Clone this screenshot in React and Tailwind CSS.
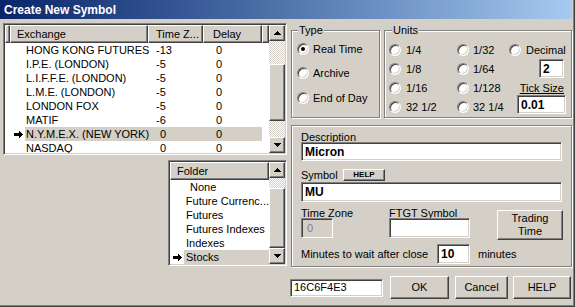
import React from "react";

const sunken =
  "border border-[#808080] border-r-white border-b-white shadow-[inset_1px_1px_0_#404040,inset_-1px_-1px_0_#d4d0c8]";
const raised =
  "border border-white border-r-[#404040] border-b-[#404040] shadow-[inset_-1px_-1px_0_#808080]";
const etched = "border border-[#808080] shadow-[1px_1px_0_#fff,inset_1px_1px_0_#fff]";
const checker =
  "bg-[image:repeating-conic-gradient(#fff_0_25%,#d4d0c8_0_50%)] bg-[length:2px_2px]";

const exchanges = [
  ["HONG KONG FUTURES", "-13", "0"],
  ["I.P.E. (LONDON)", "-5", "0"],
  ["L.I.F.F.E. (LONDON)", "-5", "0"],
  ["L.M.E. (LONDON)", "-5", "0"],
  ["LONDON FOX", "-5", "0"],
  ["MATIF", "-6", "0"],
  ["N.Y.M.E.X. (NEW YORK)", "0", "0"],
  ["NASDAQ", "0", "0"],
];

const folders = ["None", "Future Currenc...", "Futures", "Futures Indexes", "Indexes", "Stocks"];

function Arrow() {
  return (
    <svg width="9" height="7" viewBox="0 0 9 7" shapeRendering="crispEdges">
      <path d="M0 2h5V0h1v1h1v1h1v1h1v1H8v1H7v1H6v1H5V5H0z" fill="#000" />
    </svg>
  );
}

function ScrollBtn({ down }) {
  return (
    <div className={`w-[16px] h-[16px] shrink-0 bg-[#d4d0c8] ${raised} flex items-center justify-center`}>
      <svg width="7" height="4" viewBox="0 0 7 4" shapeRendering="crispEdges">
        <path d={down ? "M0 0h7v1H6v1H5v1H4v1H3V3H2V2H1V1H0z" : "M3 0h1v1h1v1h1v1h1v1H0V3h1V2h1V1h1z"} fill="#000" />
      </svg>
    </div>
  );
}

function ScrollBar({ above, thumb }) {
  return (
    <div className="w-[16px] h-full flex flex-col shrink-0">
      <ScrollBtn />
      <div className={`shrink-0 ${checker}`} style={{ height: above }} />
      <div className={`shrink-0 bg-[#d4d0c8] ${raised}`} style={{ height: thumb }} />
      <div className={`flex-1 ${checker}`} />
      <ScrollBtn down />
    </div>
  );
}

function Radio({ checked }) {
  return (
    <span className="w-[12px] h-[12px] shrink-0 rounded-full bg-white border border-[#808080] border-r-white border-b-white shadow-[inset_1px_1px_0_#404040,inset_-1px_-1px_0_#d4d0c8] flex items-center justify-center">
      {checked && <span className="w-[4px] h-[4px] rounded-full bg-black" />}
    </span>
  );
}

function RadioItem({ label, checked, gap = "ml-[4px]" }) {
  return (
    <div className="flex items-center h-[14px]">
      <Radio checked={checked} />
      <span className={`${gap} whitespace-nowrap`}>{label}</span>
    </div>
  );
}

function ExchangeList() {
  return (
    <div className={`w-[284px] h-[132px] bg-white ${sunken} p-[1px] flex`}>
      <div className="flex-1 flex flex-col overflow-hidden">
        <div className="h-[18px] flex shrink-0">
          <div className={`w-[5px] bg-[#d4d0c8] ${raised}`} />
          <div className={`w-[138px] bg-[#d4d0c8] ${raised} pl-[6px] leading-[16px]`}>Exchange</div>
          <div className={`w-[55px] bg-[#d4d0c8] ${raised} pl-[7px] leading-[16px]`}>Time Z...</div>
          <div className={`w-[59px] bg-[#d4d0c8] ${raised} pl-[9px] leading-[16px]`}>Delay</div>
          <div className={`flex-1 bg-[#d4d0c8] ${raised}`} />
        </div>
        <div className="flex-1 overflow-hidden">
          {exchanges.map(([name, tz, delay], i) => (
            <div key={i} className="h-[14px] flex leading-[14px] whitespace-nowrap">
              <div className="w-[20px] flex items-center justify-end pr-[2px]">{i === 6 && <Arrow />}</div>
              <div className={`flex w-[237px] ${i === 6 ? "bg-[#d4d0c8]" : ""}`}>
                <div className="w-[123px] pl-[1px]">{name}</div>
                <div className={`w-[55px] ${tz.startsWith("-") ? "pl-[8px]" : "pl-[12px]"}`}>{tz}</div>
                <div className="w-[59px] pl-[13px]">{delay}</div>
              </div>
            </div>
          ))}
        </div>
      </div>
      <ScrollBar above={23} thumb={57} />
    </div>
  );
}

function FolderList() {
  return (
    <div className={`mt-[5px] self-end w-[119px] h-[106px] bg-white ${sunken} p-[1px] flex`}>
      <div className="flex-1 flex flex-col overflow-hidden">
        <div className={`h-[18px] shrink-0 bg-[#d4d0c8] ${raised} pl-[6px] leading-[16px]`}>Folder</div>
        {folders.map((f, i) => (
          <div key={f} className="h-[14px] flex leading-[14px] whitespace-nowrap">
            <div className="w-[14px] flex items-center justify-end pr-[2px]">{i === 5 && <Arrow />}</div>
            <div className={`flex-1 ${i === 0 ? "pl-[6px]" : "pl-[2px]"} ${i === 5 ? "bg-[#d4d0c8]" : ""}`}>{f}</div>
          </div>
        ))}
      </div>
      <ScrollBar above={10} thumb={60} />
    </div>
  );
}

function Group({ label, labelLeft, className, children }) {
  return (
    <div className={`relative ${etched} ${className}`}>
      <span className={`absolute -top-[8px] ${labelLeft} px-[1px] bg-[#d4d0c8] leading-[14px]`}>{label}</span>
      {children}
    </div>
  );
}

function Field({ className, children }) {
  return (
    <div className={`relative bg-white ${sunken} pl-[3px] flex items-center whitespace-nowrap ${className}`}>
      {children}
    </div>
  );
}

function Button({ className, children }) {
  return (
    <div className={`bg-[#d4d0c8] ${raised} flex items-center justify-center text-center ${className}`}>
      {children}
    </div>
  );
}

export default function App() {
  return (
    <div className="w-[575px] h-[307px] bg-[#d4d0c8] text-black text-[11px] font-['Liberation_Sans',Arial,sans-serif] border-r border-b border-[#404040] overflow-hidden">
      <div className="h-full border-r border-b border-[#808080] pr-[1px] pb-[1px] flex flex-col">
        <div className="h-[19px] shrink-0 bg-linear-to-r from-[#0a246a] to-[#a6caf0] text-white font-bold text-[12px] pl-[4px] flex items-center">
          Create New Symbol
        </div>

        <div className="flex">
          <div className="ml-[3px] pt-[4px] w-[284px] flex flex-col">
            <ExchangeList />
            <FolderList />
          </div>

          <div className="ml-[4px] pt-[11px] w-[281px] flex flex-col">
            <div className="flex">
              <Group label="Type" labelLeft="left-[6px]" className="w-[89px] h-[88px] pl-[5px]">
                <div className="mt-[11px]"><RadioItem label="Real Time" checked /></div>
                <div className="mt-[10px]"><RadioItem label="Archive" /></div>
                <div className="mt-[11px]"><RadioItem label="End of Day" /></div>
              </Group>
              <Group label="Units" labelLeft="left-[7px]" className="ml-[4px] w-[188px] h-[88px] pl-[4px] flex">
                <div className="w-[68px] pt-[12px] flex flex-col gap-[5px]">
                  <RadioItem label="1/4" gap="ml-[5px]" />
                  <RadioItem label="1/8" gap="ml-[5px]" />
                  <RadioItem label="1/16" gap="ml-[5px]" />
                  <RadioItem label="32 1/2" gap="ml-[5px]" />
                </div>
                <div className="w-[52px] pt-[12px] flex flex-col gap-[5px]">
                  <RadioItem label="1/32" gap="ml-[4px]" />
                  <RadioItem label="1/64" gap="ml-[4px]" />
                  <RadioItem label="1/128" gap="ml-[4px]" />
                  <RadioItem label="32 1/4" gap="ml-[4px]" />
                </div>
                <div className="flex-1 pt-[12px] pr-[5px] flex flex-col items-end">
                  <div className="self-start">
                    <RadioItem label="Decimal" gap="ml-[5px]" />
                  </div>
                  <Field className="mt-[2px] mr-[2px] w-[25px] h-[19px] font-bold text-[12px]">2</Field>
                  <div className="mt-[4px] mr-[2px] h-[13px] leading-[13px] underline">Tick Size</div>
                  <Field className="w-[49px] h-[19px] font-bold text-[12px]">0.01</Field>
                </div>
              </Group>
            </div>

            <div className={`mt-[7px] h-[142px] ${etched} pl-[9px] flex flex-col`}>
              <div className="mt-[5px] h-[11px] leading-[13px]">Description</div>
              <Field className="w-[261px] h-[19px] font-bold text-[12px]">Micron</Field>
              <div className="mt-[8px] h-[12px] flex items-center">
                <span className="w-[42px]">Symbol</span>
                <Button className="w-[42px] h-[12px] text-[8px] font-bold leading-none">HELP</Button>
              </div>
              <Field className="mt-[1px] w-[261px] h-[20px] font-bold text-[12px]">MU</Field>
              <div className="flex">
                <div className="w-[88px] mt-[5px]">
                  <div className="h-[11px] leading-[13px] whitespace-nowrap">Time Zone</div>
                  <div className={`relative w-[32px] h-[20px] bg-[#d4d0c8] ${sunken} pl-[5px] flex items-center text-[#808080]`}>0</div>
                </div>
                <div className="w-[108px] mt-[5px]">
                  <div className="h-[11px] leading-[13px] whitespace-nowrap">FTGT Symbol</div>
                  <Field className="w-[81px] h-[20px]" />
                </div>
                <Button className="mt-[8px] w-[66px] h-[30px] leading-[13px]">
                  Trading
                  <br />
                  Time
                </Button>
              </div>
              <div className="mt-[4px] flex items-center">
                <span className="w-[136px] whitespace-nowrap">Minutes to wait after close</span>
                <Field className="w-[33px] h-[20px] font-bold text-[12px]">10</Field>
                <span className="ml-[8px]">minutes</span>
              </div>
            </div>

            <div className="mt-[9px] h-[23px] flex items-center">
              <Field className="-ml-[1px] w-[93px] h-[18px]">16C6F4E3</Field>
              <Button className="ml-[7px] w-[59px] h-[23px]">OK</Button>
              <Button className="ml-[6px] w-[53px] h-[23px]">Cancel</Button>
              <Button className="ml-[5px] w-[58px] h-[23px]">HELP</Button>
            </div>
          </div>
        </div>
      </div>
    </div>
  );
}
